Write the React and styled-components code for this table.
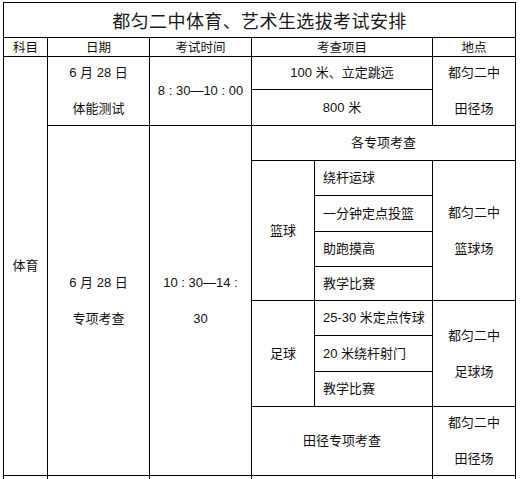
import React from 'react';
import styled, { createGlobalStyle } from 'styled-components';

const GlobalStyle = createGlobalStyle`
  html, body {
    margin: 0;
    padding: 0;
    background: #fff;
  }
  body {
    font-family: "Liberation Sans", "Noto Sans CJK SC", sans-serif;
    color: #000;
  }
`;

const Page = styled.div`
  padding: 2px 0 0 3px;
`;

// black background + 1px gaps draw the table rules
const Table = styled.div`
  display: grid;
  width: 513px;
  box-sizing: border-box;
  grid-template-columns: 43px 101px 101px 62px 117px 82px;
  grid-template-rows: 34px 18px 32px 35px 34px 34px 35px 34px 33px 34px 35px 34px 68px 40px;
  gap: 1px;
  padding: 1px;
  background: #000;
`;

const Cell = styled.div`
  grid-column: ${p => p.$col};
  grid-row: ${p => p.$row};
  background: #fff;
  display: flex;
  flex-direction: column;
  justify-content: center;
  align-items: ${p => (p.$left ? 'flex-start' : 'center')};
  padding-left: ${p => (p.$left ? '8px' : '0')};
  font-size: 13px;
  line-height: 36px;
  white-space: pre;
  color: #111;
`;

const Title = styled(Cell)`
  font-family: "Noto Sans CJK SC", sans-serif;
  font-size: 18px;
  letter-spacing: 0.4px;
  line-height: 24px;
  color: #1a1a1a;
`;

const Head = styled(Cell)`
  font-family: "Noto Sans CJK SC", sans-serif;
  font-size: 12.5px;
  line-height: 18px;
`;

const Line = styled.span`
  display: block;
`;

const basketball = ['绕杆运球', '一分钟定点投篮', '助跑摸高', '教学比赛'];
const football = ['25-30 米定点传球', '20 米绕杆射门', '教学比赛'];

const App = () => {
  return (
    <Page>
      <GlobalStyle />
      <Table>
        <Title $col="1 / 7" $row="1">都匀二中体育、艺术生选拔考试安排</Title>

        <Head $col="1" $row="2">科目</Head>
        <Head $col="2" $row="2">日期</Head>
        <Head $col="3" $row="2">考试时间</Head>
        <Head $col="4 / 6" $row="2">考查项目</Head>
        <Head $col="6" $row="2">地点</Head>

        <Cell $col="1" $row="3 / 14">体育</Cell>

        <Cell $col="2" $row="3 / 5">
          <Line>6 月 28 日</Line>
          <Line>体能测试</Line>
        </Cell>
        <Cell $col="3" $row="3 / 5">8 : 30—10 : 00</Cell>
        <Cell $col="4 / 6" $row="3">100 米、立定跳远</Cell>
        <Cell $col="4 / 6" $row="4">800 米</Cell>
        <Cell $col="6" $row="3 / 5">
          <Line>都匀二中</Line>
          <Line>田径场</Line>
        </Cell>

        <Cell $col="2" $row="5 / 14">
          <Line>6 月 28 日</Line>
          <Line>专项考查</Line>
        </Cell>
        <Cell $col="3" $row="5 / 14">
          <Line>10 : 30—14 :</Line>
          <Line>30</Line>
        </Cell>
        <Cell $col="4 / 7" $row="5">各专项考查</Cell>

        <Cell $col="4" $row="6 / 10">篮球</Cell>
        {basketball.map((item, i) => (
          <Cell key={item + i} $col="5" $row={6 + i} $left>{item}</Cell>
        ))}
        <Cell $col="6" $row="6 / 10">
          <Line>都匀二中</Line>
          <Line>篮球场</Line>
        </Cell>

        <Cell $col="4" $row="10 / 13">足球</Cell>
        {football.map((item, i) => (
          <Cell key={item + i} $col="5" $row={10 + i} $left>{item}</Cell>
        ))}
        <Cell $col="6" $row="10 / 13">
          <Line>都匀二中</Line>
          <Line>足球场</Line>
        </Cell>

        <Cell $col="4 / 6" $row="13">田径专项考查</Cell>
        <Cell $col="6" $row="13">
          <Line>都匀二中</Line>
          <Line>田径场</Line>
        </Cell>

        <Cell $col="1" $row="14" />
        <Cell $col="2" $row="14" />
        <Cell $col="3" $row="14" />
        <Cell $col="4 / 6" $row="14" />
        <Cell $col="6" $row="14" />
      </Table>
    </Page>
  );
};

export default App;
